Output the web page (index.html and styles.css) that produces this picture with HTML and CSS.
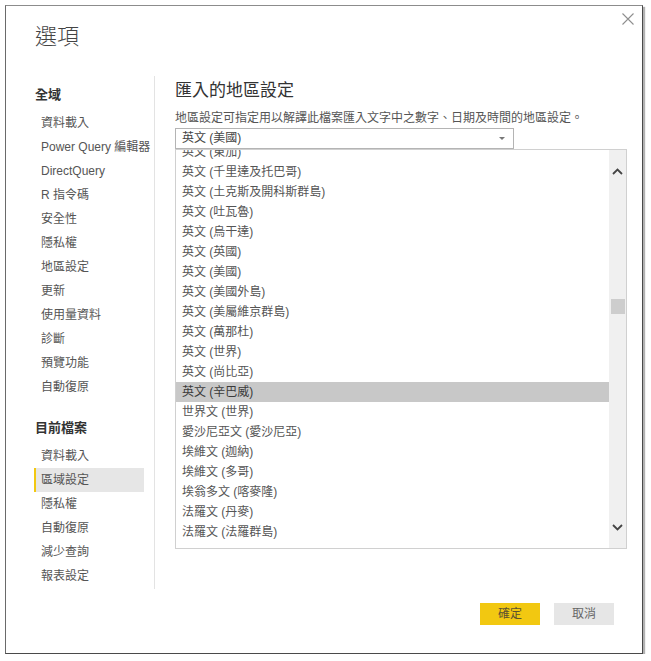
FILE: index.html
```html
<!DOCTYPE html>
<html lang="zh-Hant">
<head>
<meta charset="utf-8">
<title>選項</title>
<link rel="stylesheet" href="styles.css">
</head>
<body>
<div class="dialog">
  <div class="header">
    <h1 class="title">選項</h1>
    <button class="close" aria-label="關閉"><svg width="12" height="12" viewBox="0 0 12 12"><path d="M0.5 0.5L11.5 11.5M11.5 0.5L0.5 11.5" stroke="#8f8f8f" stroke-width="1.1" fill="none"/></svg></button>
  </div>
  <div class="body">
    <nav class="nav">
      <div class="nav-heading">全域</div>
      <ul class="nav-list">
        <li class="nav-item">資料載入</li>
        <li class="nav-item">Power Query 編輯器</li>
        <li class="nav-item">DirectQuery</li>
        <li class="nav-item">R 指令碼</li>
        <li class="nav-item">安全性</li>
        <li class="nav-item">隱私權</li>
        <li class="nav-item">地區設定</li>
        <li class="nav-item">更新</li>
        <li class="nav-item">使用量資料</li>
        <li class="nav-item">診斷</li>
        <li class="nav-item">預覽功能</li>
        <li class="nav-item">自動復原</li>
      </ul>
      <div class="nav-heading second">目前檔案</div>
      <ul class="nav-list">
        <li class="nav-item">資料載入</li>
        <li class="nav-item active">區域設定</li>
        <li class="nav-item">隱私權</li>
        <li class="nav-item">自動復原</li>
        <li class="nav-item">減少查詢</li>
        <li class="nav-item">報表設定</li>
      </ul>
    </nav>
    <section class="content">
      <h2 class="content-title">匯入的地區設定</h2>
      <p class="desc">地區設定可指定用以解譯此檔案匯入文字中之數字、日期及時間的地區設定。</p>
      <div class="select"><span class="select-value">英文 (美國)</span><span class="caret"></span></div>
      <div class="listbox">
        <ul class="options">
          <li class="option">英文 (東加)</li>
          <li class="option">英文 (千里達及托巴哥)</li>
          <li class="option">英文 (土克斯及開科斯群島)</li>
          <li class="option">英文 (吐瓦魯)</li>
          <li class="option">英文 (烏干達)</li>
          <li class="option">英文 (英國)</li>
          <li class="option">英文 (美國)</li>
          <li class="option">英文 (美國外島)</li>
          <li class="option">英文 (美屬維京群島)</li>
          <li class="option">英文 (萬那杜)</li>
          <li class="option">英文 (世界)</li>
          <li class="option">英文 (尚比亞)</li>
          <li class="option selected">英文 (辛巴威)</li>
          <li class="option">世界文 (世界)</li>
          <li class="option">愛沙尼亞文 (愛沙尼亞)</li>
          <li class="option">埃維文 (迦納)</li>
          <li class="option">埃維文 (多哥)</li>
          <li class="option">埃翁多文 (喀麥隆)</li>
          <li class="option">法羅文 (丹麥)</li>
          <li class="option">法羅文 (法羅群島)</li>
        </ul>
        <div class="scrollbar">
          <div class="sb-btn"><svg width="11" height="7" viewBox="0 0 11 7"><path d="M1 6L5.5 1.5L10 6" stroke="#444" stroke-width="1.8" fill="none"/></svg></div>
          <div class="sb-track"><div class="sb-thumb"></div></div>
          <div class="sb-btn"><svg width="11" height="7" viewBox="0 0 11 7"><path d="M1 1L5.5 5.5L10 1" stroke="#444" stroke-width="1.8" fill="none"/></svg></div>
        </div>
      </div>
    </section>
  </div>
  <div class="footer">
    <button class="btn primary">確定</button>
    <button class="btn">取消</button>
  </div>
</div>
</body>
</html>
```

FILE: styles.css
```css
* { box-sizing: border-box; }
html, body { margin: 0; padding: 0; background: #fff; }
body {
  font-family: "Liberation Sans", "Noto Sans CJK TC", sans-serif;
  font-size: 12px;
  color: #555;
  padding: 5px 0 0 5px;
}
ul { list-style: none; margin: 0; padding: 0; }
h1, h2, p { margin: 0; font-weight: normal; }
button { font-family: inherit; border: 0; padding: 0; background: none; }

.dialog {
  width: 638px;
  height: 649px;
  border: 1px solid #4a4a4a;
  border-top-color: #8c8c8c;
  border-left-color: #6a6a6a;
  box-shadow: 2px 2px 1px rgba(0, 0, 0, 0.3);
  background: #fff;
  display: flex;
  flex-direction: column;
}

.header {
  display: flex;
  justify-content: space-between;
  align-items: flex-start;
  padding: 7px 8px 0 29px;
}
.title {
  margin-top: 9px;
  font-size: 22px;
  line-height: 30px;
  color: #444;
  font-weight: 300;
}
.close {
  margin-top: 0;
  width: 12px;
  height: 12px;
  display: flex;
}

.body {
  display: flex;
  margin-top: 24px;
  align-items: flex-start;
}

.nav {
  width: 149px;
  flex: none;
  border-right: 1px solid #e3e3e3;
  padding: 7px 0 1px 28px;
}
.nav-heading {
  font-size: 13px;
  font-weight: bold;
  line-height: 24px;
  color: #333;
  padding-left: 1px;
  margin-bottom: 4px;
}
.nav-heading.second { margin-top: 17px; }
.nav-item {
  width: 110px;
  line-height: 24px;
  height: 24px;
  border-left: 2px solid transparent;
  padding-left: 5px;
  white-space: nowrap;
  color: #555;
}
.nav-item.active {
  background: #e6e6e6;
  border-left-color: #f2c811;
}

.content {
  flex: 1;
  padding: 3px 0 0 20px;
}
.content-title {
  font-size: 17px;
  line-height: 24px;
  color: #333;
}
.desc {
  margin-top: 6px;
  line-height: 18px;
  color: #555;
}
.select {
  margin-top: 1px;
  width: 339px;
  height: 21px;
  border: 1px solid #b4b4b4;
  display: flex;
  align-items: center;
  justify-content: space-between;
  padding: 0 8px 0 6px;
}
.select-value { line-height: 19px; color: #444; }
.caret {
  width: 0;
  height: 0;
  border-left: 3px solid transparent;
  border-right: 3px solid transparent;
  border-top: 3px solid #777;
}

.listbox {
  width: 452px;
  height: 400px;
  border: 1px solid #d0d0d0;
  display: flex;
}
.options {
  flex: 1;
  overflow: hidden;
}
.option:first-child { margin-top: -8px; }
.option {
  height: 20px;
  line-height: 20px;
  padding-left: 6px;
  white-space: nowrap;
  color: #555;
}
.option.selected {
  background: #c8c8c8;
  color: #3a3a3a;
}

.scrollbar {
  width: 17px;
  flex: none;
  background: #f0f0f0;
  display: flex;
  flex-direction: column;
}
.sb-btn {
  height: 42px;
  display: flex;
  align-items: center;
  justify-content: center;
}
.sb-btn svg { display: block; }
.sb-track { flex: 1; }
.sb-thumb {
  margin: 107px 0 0 2px;
  width: 14px;
  height: 15px;
  background: #cdcdcd;
}

.footer {
  display: flex;
  justify-content: flex-end;
  gap: 14px;
  padding-right: 28px;
  margin-top: 14px;
}
.btn {
  width: 60px;
  height: 22px;
  font-size: 12px;
  line-height: 22px;
  color: #666;
  background: #e6e6e6;
}
.btn.primary {
  background: #f2c811;
  color: #5c5230;
}
```
